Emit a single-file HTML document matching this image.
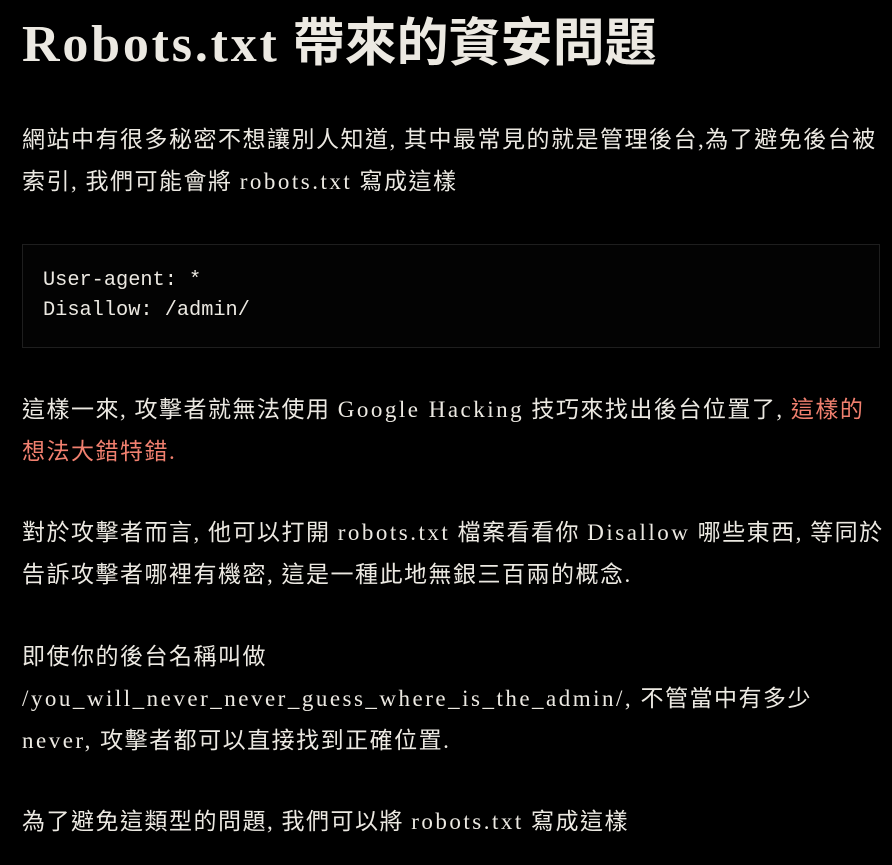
<!DOCTYPE html>
<html><head><meta charset="utf-8"><style>
html,body{margin:0;background:#000;width:892px;height:865px;overflow:hidden}
body{position:relative;color:#ece9e2;font-family:"Liberation Serif","Noto Sans CJK TC",serif;font-size:23px;letter-spacing:1.5px}
.l{position:absolute;left:22px;white-space:nowrap;line-height:42px;height:42px}
.l i{font-style:normal;letter-spacing:2.5px}
h1{position:absolute;left:22px;top:13px;margin:0;font-size:52px;line-height:64px;font-weight:bold;white-space:nowrap;font-family:"Liberation Serif","Noto Sans CJK TC",serif;letter-spacing:0}
h1 .e{letter-spacing:2.8px}
.code{position:absolute;left:22px;top:244px;width:856px;height:102px;border:1px solid #1e1e1e;background:#030303;letter-spacing:0}
.c{position:absolute;left:20px;font-family:"Liberation Mono","DejaVu Sans Mono",monospace;font-size:20.3px;line-height:30px;white-space:nowrap}
.r{color:#f1806f}
</style></head><body>
<h1><span class="e">Robots.txt</span> 帶來的資安問題</h1>
<div class="l" style="top:119px">網站中有很多秘密不想讓別人知道, 其中最常見的就是管理後台,為了避免後台被</div>
<div class="l" style="top:161px">索引, 我們可能會將 <i>robots.txt</i> 寫成這樣</div>
<div class="code"><div class="c" style="top:21px">User-agent: *</div><div class="c" style="top:51px">Disallow: /admin/</div></div>
<div class="l" style="top:389px">這樣一來, 攻擊者就無法使用 <i>Google Hacking</i> 技巧來找出後台位置了, <span class="r">這樣的</span></div>
<div class="l r" style="top:431px">想法大錯特錯.</div>
<div class="l" style="top:512px">對於攻擊者而言, 他可以打開 <i>robots.txt</i> 檔案看看你 <i>Disallow</i> 哪些東西, 等同於</div>
<div class="l" style="top:554px">告訴攻擊者哪裡有機密, 這是一種此地無銀三百兩的概念.</div>
<div class="l" style="top:636px">即使你的後台名稱叫做</div>
<div class="l" style="top:678px"><i>/you_will_never_never_guess_where_is_the_admin/,</i> 不管當中有多少</div>
<div class="l" style="top:720px"><i>never,</i> 攻擊者都可以直接找到正確位置.</div>
<div class="l" style="top:801px">為了避免這類型的問題, 我們可以將 <i>robots.txt</i> 寫成這樣</div>
</body></html>
